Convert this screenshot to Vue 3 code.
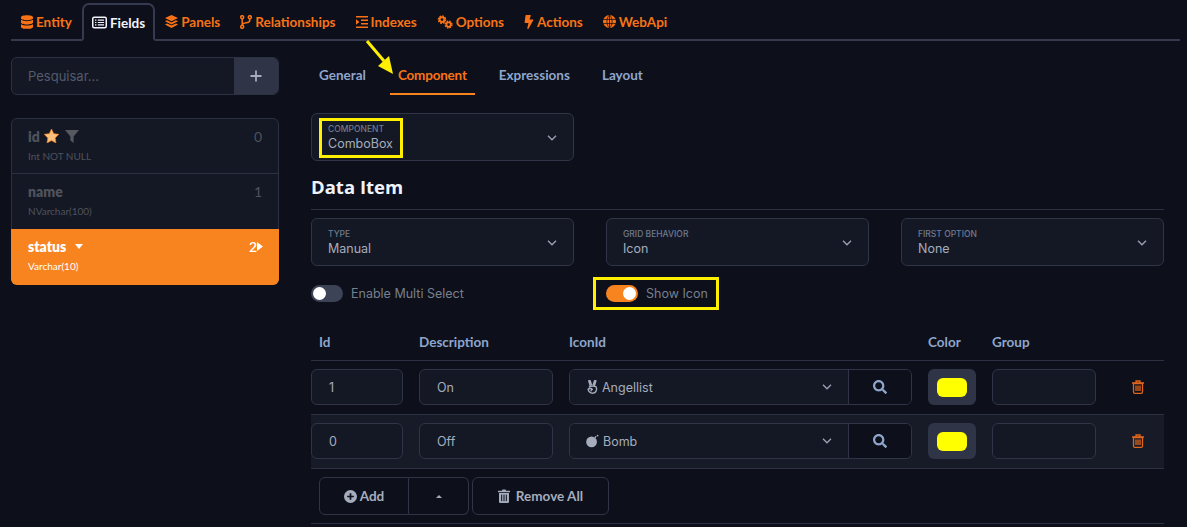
<script setup>
const tabs = [
  { name: 'Entity', icon: 'database' },
  { name: 'Fields', icon: 'list', active: true },
  { name: 'Panels', icon: 'layers' },
  { name: 'Relationships', icon: 'branch' },
  { name: 'Indexes', icon: 'indent' },
  { name: 'Options', icon: 'cogs' },
  { name: 'Actions', icon: 'bolt' },
  { name: 'WebApi', icon: 'globe' },
]
const subTabs = ['General', 'Component', 'Expressions', 'Layout']
const fields = [
  { name: 'id', type: 'Int NOT NULL', idx: 0 },
  { name: 'name', type: 'NVarchar(100)', idx: 1 },
  { name: 'status', type: 'Varchar(10)', idx: 2, active: true },
]
const selects = [
  { label: 'TYPE', value: 'Manual' },
  { label: 'GRID BEHAVIOR', value: 'Icon' },
  { label: 'FIRST OPTION', value: 'None' },
]
const items = [
  { id: 1, desc: 'On', icon: 'Angellist' },
  { id: 0, desc: 'Off', icon: 'Bomb' },
]
</script>

<template>
  <div class="page">
    <nav class="tabs">
      <a v-for="t in tabs" :key="t.name" class="tab" :class="{ active: t.active }">
        <svg v-if="t.icon === 'database'" class="ti" width="12" height="14" viewBox="0 0 448 512" fill="currentColor"><path d="M448 73.143v45.714C448 159.143 347.667 192 224 192S0 159.143 0 118.857V73.143C0 32.857 100.333 0 224 0s224 32.857 224 73.143zM448 176v102.857C448 319.143 347.667 352 224 352S0 319.143 0 278.857V176c48.125 33.143 136.208 48.572 224 48.572S399.874 209.143 448 176zm0 160v102.857C448 479.143 347.667 512 224 512S0 479.143 0 438.857V336c48.125 33.143 136.208 48.572 224 48.572S399.874 369.143 448 336z"/></svg>
        <svg v-else-if="t.icon === 'list'" class="ti" width="15" height="13" viewBox="0 0 15 13" fill="none" stroke="currentColor"><rect x="0.75" y="1.25" width="13.5" height="10.5" rx="1.5" stroke-width="1.5"/><path d="M3 4.2h1.4M3 6.5h1.4M3 8.8h1.4M5.8 4.2h6.2M5.8 6.5h6.2M5.8 8.8h6.2" stroke-width="1.2"/></svg>
        <svg v-else-if="t.icon === 'layers'" class="ti" width="13" height="13" viewBox="0 0 13 13" fill="currentColor"><path d="M6.5 0 13 3.1 6.5 6.2 0 3.1zM2 5.3l4.5 2.1L11 5.3l2 1-6.5 3.1L0 6.3zM2 8.5l4.5 2.1L11 8.5l2 1L6.5 13 0 9.5z"/></svg>
        <svg v-else-if="t.icon === 'branch'" class="ti" width="12" height="14" viewBox="0 0 12 14" fill="none" stroke="currentColor" stroke-width="1.5"><circle cx="2.2" cy="2.2" r="1.5"/><circle cx="9.8" cy="2.2" r="1.5"/><circle cx="2.2" cy="11.8" r="1.5"/><path d="M2.2 3.7v6.6M9.8 3.7v1.2c0 2-1.5 2.6-3.5 2.8-2 .2-4.1.6-4.1 2.6"/></svg>
        <svg v-else-if="t.icon === 'indent'" class="ti" width="12" height="12" viewBox="0 0 12 12" fill="currentColor"><path d="M0 0h12v1.6H0zM5 3.4h7V5H5zM5 7h7v1.6H5zM0 10.4h12V12H0zM0 3.2 3.4 6 0 8.8z"/></svg>
        <svg v-else-if="t.icon === 'cogs'" class="ti" width="16" height="14" viewBox="0 0 16 14"><g fill="none" stroke="currentColor"><circle cx="5" cy="4.6" r="2.4" stroke-width="2"/><circle cx="5" cy="4.6" r="3.6" stroke-width="1.4" stroke-dasharray="1.7 1.1"/><circle cx="11.6" cy="9.6" r="2.2" stroke-width="1.8"/><circle cx="11.6" cy="9.6" r="3.4" stroke-width="1.3" stroke-dasharray="1.6 1.1"/></g></svg>
        <svg v-else-if="t.icon === 'bolt'" class="ti" width="10" height="14" viewBox="0 0 320 512" fill="currentColor"><path d="M296 160H180.6l42.6-129.8C227.2 15 215.7 0 200 0H56C44 0 33.8 8.9 32.2 20.8l-32 240C-1.7 275.2 9.5 288 24 288h118.7L96.6 482.5c-3.6 15.2 8 29.5 23.3 29.5 8.4 0 16.4-4.4 20.8-12l176-304c9.3-15.9-2.2-36-20.7-36z"/></svg>
        <svg v-else class="ti" width="13" height="13" viewBox="0 0 13 13"><circle cx="6.5" cy="6.5" r="6.5" fill="currentColor"/><path d="M0 4.4h13M0 8.6h13M6.5 0v13M6.5 0C3 3 3 10 6.5 13M6.5 0C10 3 10 10 6.5 13" fill="none" stroke="#0d0f1a" stroke-width=".8"/></svg>
        <span>{{ t.name }}</span>
      </a>
    </nav>

    <div class="body">
      <aside class="side">
        <div class="search">
          <span class="search-input">Pesquisar...</span>
          <span class="search-btn">
            <svg width="12" height="12" viewBox="0 0 12 12" stroke="currentColor" stroke-width="1.8"><path d="M6 .5v11M.5 6h11"/></svg>
          </span>
        </div>
        <ul class="fields">
          <li v-for="f in fields" :key="f.name" class="field" :class="{ active: f.active }">
            <div class="field-top">
              <span class="field-name">{{ f.name }}</span>
              <svg v-if="f.name === 'id'" class="star" width="15" height="14" viewBox="0 0 24 23"><path d="M12 0l3.7 7.6 8.3 1.2-6 5.9 1.4 8.3L12 19l-7.4 4L6 14.7 0 8.8l8.3-1.2z" fill="#fdc078" stroke="#f5821f" stroke-width="1"/></svg>
              <svg v-if="f.name === 'id'" class="funnel" width="14" height="13" viewBox="0 0 14 13"><path d="M0 0h14L8.6 6.4V13L5.4 10.6V6.4z" fill="#55585f"/></svg>
              <svg v-if="f.active" class="caret" width="8" height="5" viewBox="0 0 8 5"><path d="M0 0h8L4 5z" fill="#fff"/></svg>
              <span class="field-idx">{{ f.idx }}</span>
              <svg v-if="f.active" class="play" width="6" height="9" viewBox="0 0 6 9"><path d="M0 0l6 4.5L0 9z" fill="#fff"/></svg>
            </div>
            <div class="field-type">{{ f.type }}</div>
          </li>
        </ul>
      </aside>

      <main class="main">
        <div class="subtabs">
          <a v-for="s in subTabs" :key="s" class="subtab" :class="{ active: s === 'Component' }">{{ s }}</a>
        </div>

        <div class="select-grid first">
          <div class="select">
            <div>
              <div class="select-label">COMPONENT</div>
              <div class="select-value">ComboBox</div>
            </div>
            <svg class="chev" width="10" height="6" viewBox="0 0 10 6" fill="none" stroke="#9aa3b5" stroke-width="1.3"><path d="M1 .8l4 4 4-4"/></svg>
            <span class="mark mark-combo"></span>
          </div>
        </div>

        <h2 class="heading">Data Item</h2>

        <div class="select-grid">
          <div v-for="s in selects" :key="s.label" class="select">
            <div>
              <div class="select-label">{{ s.label }}</div>
              <div class="select-value">{{ s.value }}</div>
            </div>
            <svg class="chev" width="10" height="6" viewBox="0 0 10 6" fill="none" stroke="#9aa3b5" stroke-width="1.3"><path d="M1 .8l4 4 4-4"/></svg>
          </div>
        </div>

        <div class="select-grid toggles">
          <label class="toggle">
            <span class="switch"><span class="knob"></span></span>
            Enable Multi Select
          </label>
          <label class="toggle">
            <span class="switch on"><span class="knob"></span></span>
            Show Icon
            <span class="mark mark-toggle"></span>
          </label>
        </div>

        <div class="row head">
          <span class="th first-th">Id</span>
          <span class="th">Description</span>
          <span class="th">IconId</span>
          <span class="th">Color</span>
          <span class="th">Group</span>
        </div>
        <div v-for="(it, i) in items" :key="it.id" class="row" :class="{ odd: i === 1 }">
          <div class="input">{{ it.id }}</div>
          <div class="input">{{ it.desc }}</div>
          <div class="icon-pick">
            <div class="icon-select">
              <svg v-if="it.icon === 'Angellist'" class="pick-ic" width="11" height="14" viewBox="0 0 11 14" fill="none" stroke="#a5adbd" stroke-width="1.4" stroke-linejoin="round"><path d="M3.4 6.200 1.900 1.300c-.3-1 1-1.400 1.300-.4L4.700 5.400M7.200 6.200 8.800 1.300c.3-1-1-1.400-1.300-.4L6 5.400"/><path d="M1.800 7.200c2-1.100 5-1.300 7.200-.5.800 1.700.6 3.800-.3 5.100-1.300 1.700-4.300 1.800-5.900.5-1-.8-1.600-2-1.700-3.100.9-1 3.400-.9 4.200.2-.7.300-1.300 1-1.500 1.900"/></svg>
              <svg v-else class="pick-ic bomb" width="13" height="14" viewBox="0 0 14 14"><circle cx="6" cy="8" r="5.800" fill="#a5adbd"/><path d="M9.500 3.500l1.500-1.600" stroke="#a5adbd" stroke-width="1.300"/><circle cx="12.500" cy="1.200" r=".9" fill="#a5adbd"/></svg>
              <span>{{ it.icon }}</span>
              <svg class="chev" width="10" height="6" viewBox="0 0 10 6" fill="none" stroke="#9aa3b5" stroke-width="1.3"><path d="M1 .8l4 4 4-4"/></svg>
            </div>
            <div class="icon-search">
              <svg width="14" height="14" viewBox="0 0 512 512" fill="#8ea6cc"><path d="M505 442.7L405.3 343c-4.500-4.500-10.600-7-17-7H372c27.600-35.300 44-79.700 44-128C416 93.100 322.900 0 208 0S0 93.100 0 208s93.100 208 208 208c48.300 0 92.700-16.400 128-44v16.300c0 6.400 2.500 12.500 7 17l99.700 99.700c9.400 9.400 24.600 9.400 33.900 0l28.300-28.300c9.400-9.400 9.400-24.600.1-34zM208 336c-70.700 0-128-57.200-128-128 0-70.700 57.200-128 128-128 70.700 0 128 57.200 128 128 0 70.700-57.200 128-128 128z"/></svg>
            </div>
          </div>
          <div class="color"><span class="swatch"></span></div>
          <div class="input"></div>
          <div class="trash">
            <svg width="12" height="14" viewBox="0 0 12 14" fill="none" stroke="#e0651a" stroke-width="1.300"><path d="M0 3h12M4 2.500V1h4v1.500"/><path d="M1.500 3.500h9V12a1.300 1.300 0 0 1-1.300 1.300H2.800A1.300 1.300 0 0 1 1.500 12zM4 5.500v5.500M6 5.500v5.500M8 5.500v5.500"/></svg>
          </div>
        </div>

        <div class="footer">
          <div class="btn-group">
            <button class="btn add">
              <svg width="13" height="13" viewBox="0 0 13 13"><circle cx="6.500" cy="6.500" r="6.500" fill="#a5adbd"/><path d="M6.500 3.200v6.600M3.200 6.500h6.600" stroke="#0d0f1a" stroke-width="1.700"/></svg>
              Add
            </button>
            <button class="btn up">
              <svg width="6" height="3" viewBox="0 0 6 3"><path d="M3 0l3 3H0z" fill="#a5adbd"/></svg>
            </button>
          </div>
          <button class="btn remove">
            <svg width="12" height="14" viewBox="0 0 12 14" fill="#a5adbd"><path d="M0 1.800h3.800L4.500.5h3l.700 1.300H12V3.200H0zM1 4h10v8.700a1.300 1.300 0 0 1-1.300 1.300H2.300A1.300 1.300 0 0 1 1 12.700z"/><path d="M3.700 5.600v6.600M6 5.600v6.600M8.300 5.600v6.600" stroke="#0d0f1a"/></svg>
            Remove All
          </button>
        </div>
      </main>
    </div>

    <svg class="arrow" width="40" height="40" viewBox="0 0 40 40"><path d="M2 1l17 20" stroke="#ffef00" stroke-width="3"/><path d="M28 34l-15-8 11-10z" fill="#ffef00"/></svg>
  </div>
</template>

<style>
body { background: #0d0f1a; }
</style>

<style scoped>
.page {
  position: relative;
  width: 1187px;
  height: 527px;
  overflow: hidden;
  background: #0d0f1a;
  font-family: Lato, "Open Sans", sans-serif;
  font-size: 13px;
  color: #a5adbd;
  box-sizing: border-box;
  padding: 3px 23px 0 11px;
}
.tabs {
  display: flex;
  height: 36px;
  margin-right: -16px;
  border-bottom: 2px solid #353a50;
}
.tab {
  display: flex;
  align-items: center;
  gap: 3px;
  height: 36px;
  padding: 1px 10px 0;
  color: #f97316;
  font-weight: 700;
  font-size: 13.500px;
  box-sizing: border-box;
}
.tab.active {
  height: 38px;
  padding: 1px 8px 0;
  color: #f1f5fb;
  border: 2px solid #353a50;
  border-bottom-color: #0d0f1a;
  border-radius: 7px 7px 0 0;
}
.ti { flex: none; }

.body {
  display: grid;
  grid-template-columns: 268px 1fr;
  gap: 32px;
  padding-top: 16px;
}

.search {
  display: flex;
  height: 38px;
  border: 1px solid #2c3043;
  border-radius: 6px;
  background: #141824;
  overflow: hidden;
  box-sizing: border-box;
}
.search-input {
  flex: 1;
  display: flex;
  align-items: center;
  padding-left: 16px;
  color: #555a6c;
  font-family: Inter, sans-serif;
  font-size: 13px;
}
.search-btn {
  width: 44px;
  display: flex;
  align-items: center;
  justify-content: center;
  background: #2f3446;
  color: #a5adbd;
}

.fields {
  list-style: none;
  margin: 23px 0 0;
  padding: 0;
  border: 1px solid #2c3043;
  border-radius: 6px;
  background: #141824;
}
.field {
  height: 55px;
  box-sizing: border-box;
  padding: 8px 16px 0;
  border-bottom: 1px solid #2c3043;
  color: #4e525c;
}
.field:nth-child(2) { border-bottom: 0; }
.field:last-child { height: 56px; border-bottom: 0; }
.field.active {
  margin: 0 -1px -1px;
  padding: 8px 17px 0;
  border-radius: 0 0 6px 6px;
  background: #f8841f;
  color: #fff;
}
.field-top {
  display: flex;
  align-items: center;
  gap: 3px;
  height: 18px;
}
.field-name { font-weight: 800; font-size: 14px; }
.star { margin-left: 1px; }
.funnel { margin-left: 3px; }
.caret { margin-left: 6px; }
.field-idx { margin-left: auto; font-size: 14px; }
.field.active .field-idx { font-weight: 600; margin-right: -3px; }
.play { margin-right: -1px; }
.field-type {
  margin-top: 5px;
  font-size: 10px;
}

.subtabs {
  display: flex;
  gap: 16px;
  height: 38px;
}
.subtab {
  display: flex;
  align-items: center;
  padding: 0 8px 2px;
  height: 38px;
  box-sizing: border-box;
  color: #8ea6cc;
  font-weight: 700;
  font-size: 13.500px;
}
.subtab.active {
  color: #f97316;
  letter-spacing: -0.2px;
  padding-bottom: 0;
  border-bottom: 2px solid #f8841f;
}

.select-grid {
  display: grid;
  grid-template-columns: repeat(3, 263px);
  gap: 32px;
}
.select-grid.first { margin-top: 18px; }
.select {
  position: relative;
  display: flex;
  align-items: center;
  justify-content: space-between;
  height: 48px;
  box-sizing: border-box;
  padding: 2px 16px 0;
  border: 1px solid #2f3447;
  border-radius: 6px;
  background: #141824;
}
.select-label {
  font-family: Inter, sans-serif;
  font-size: 8.500px;
  line-height: 11px;
  color: #6f7a90;
  font-weight: 500;
}
.select-value {
  font-family: Inter, sans-serif;
  font-size: 12.500px;
  line-height: 17px;
  color: #a5adbd;
}
.heading {
  margin: 15px 0 0;
  height: 33px;
  font-family: "Open Sans", sans-serif;
  font-size: 18.500px;
  line-height: 22px;
  font-weight: 700;
  color: #eef3fb;
  border-bottom: 1px solid #2c3043;
  box-sizing: content-box;
}
.heading + .select-grid { margin-top: 8px; }

.toggles { margin-top: 18px; height: 18px; }
.toggle {
  position: relative;
  display: flex;
  align-items: center;
  gap: 8px;
  font-family: Inter, sans-serif;
  font-size: 12.500px;
  color: #75808f;
}
.switch {
  display: flex;
  align-items: center;
  width: 32px;
  height: 17px;
  border-radius: 9px;
  background: #3d4356;
  padding: 0 2px;
  box-sizing: border-box;
}
.switch.on { background: #f8841f; justify-content: flex-end; }
.knob {
  width: 13px;
  height: 13px;
  border-radius: 50%;
  background: #fff;
}

.mark {
  position: absolute;
  border: 3px solid #ffef00;
  box-sizing: border-box;
  pointer-events: none;
}
.mark-combo { left: 7px; top: 4px; width: 84px; height: 40px; }
.mark-toggle { left: -13px; top: -7px; width: 126px; height: 33px; }

.row {
  display: grid;
  grid-template-columns: 92px 134px 343px 48px 104px 1fr;
  gap: 16px;
  align-items: start;
  height: 54px;
  box-sizing: border-box;
  padding-top: 8px;
  border-bottom: 1px solid #2c3043;
}
.row.odd { background: #171b27; }
.row.head {
  height: 37px;
  margin-top: 22px;
  padding-top: 0;
  align-items: center;
}
.th { font-weight: 700; font-size: 13.500px; color: #8ea6cc; }
.first-th { padding-left: 8px; }
.input {
  height: 36px;
  box-sizing: border-box;
  display: flex;
  align-items: center;
  padding-left: 17px;
  border: 1px solid #2f3447;
  border-radius: 6px;
  background: #141824;
  font-family: Inter, sans-serif;
  font-size: 12.500px;
}
.icon-pick {
  display: flex;
  height: 36px;
  box-sizing: border-box;
  border: 1px solid #2f3447;
  border-radius: 6px;
  overflow: hidden;
}
.icon-select {
  flex: 1;
  display: flex;
  align-items: center;
  gap: 4px;
  padding: 0 16px 0 17px;
  background: #141824;
  font-family: Inter, sans-serif;
  font-size: 12.500px;
}
.icon-select .chev { margin-left: auto; }
.pick-ic.bomb { margin-left: -1px; }
.icon-search {
  width: 62px;
  display: flex;
  align-items: center;
  justify-content: center;
  border-left: 1px solid #2f3447;
  background: #0d0f1a;
}
.color {
  height: 36px;
  display: flex;
  align-items: center;
  justify-content: center;
  background: #2f3446;
  border-radius: 6px;
}
.swatch {
  width: 30px;
  height: 19px;
  border-radius: 6px;
  background: #ffff00;
}
.trash {
  height: 36px;
  display: flex;
  align-items: center;
  justify-content: center;
}
.footer {
  display: flex;
  gap: 3px;
  height: 55px;
  box-sizing: border-box;
  padding: 8px 0 0 8px;
  border-bottom: 1px solid #2c3043;
}
.btn-group { display: flex; }
.btn {
  display: flex;
  align-items: center;
  justify-content: center;
  gap: 3px;
  height: 38px;
  background: transparent;
  border: 1px solid #2f3447;
  color: #a5adbd;
  font-family: Lato, sans-serif;
  font-weight: 700;
  font-size: 13.500px;
  padding: 0;
}
.btn.add { width: 90px; border-radius: 6px 0 0 6px; }
.btn.up { width: 60px; border-left: 0; border-radius: 0 6px 6px 0; }
.btn.remove { width: 137px; gap: 6px; border-radius: 6px; }

.arrow {
  position: absolute;
  left: 365px;
  top: 40px;
}
</style>
